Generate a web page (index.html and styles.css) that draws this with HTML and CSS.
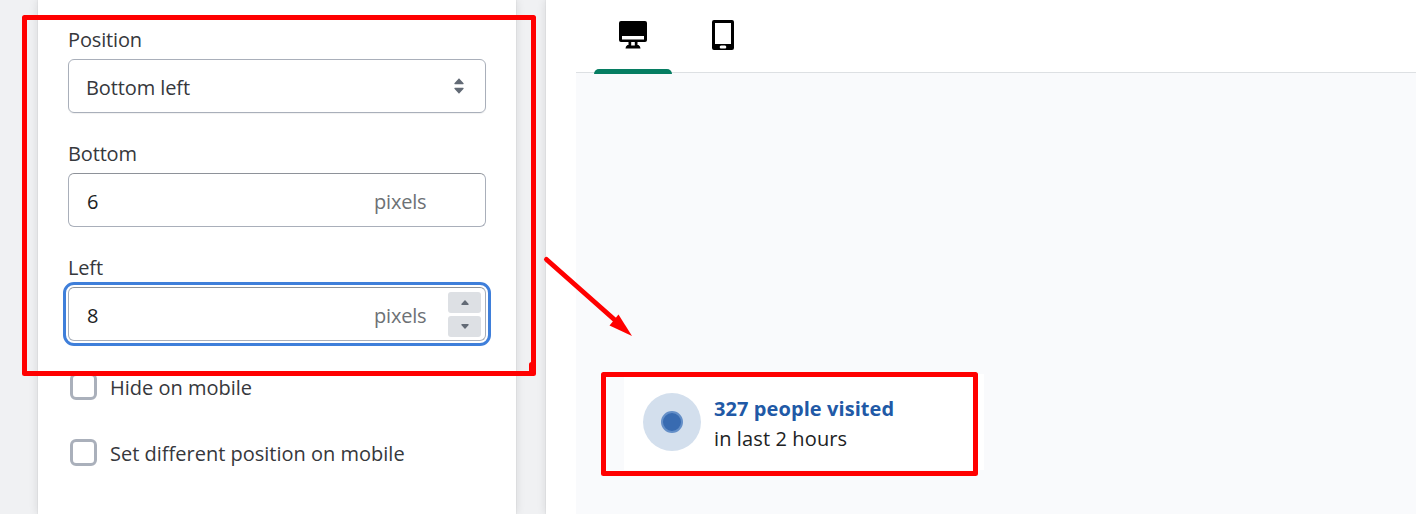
FILE: index.html
```html
<!DOCTYPE html>
<html lang="en">
<head>
<meta charset="utf-8">
<title>Widget position</title>
<link rel="stylesheet" href="styles.css">
</head>
<body>
<main class="layout">
  <section class="settings">
    <div class="field">
      <div class="label">Position</div>
      <div class="control select">
        <span class="value">Bottom left</span>
        <svg class="sort" viewBox="0 0 10 16"><path d="M5 .3 9.6 5.2Q9.9 6.3 9 6.3H1Q.1 6.3 .4 5.2ZM5 15.7.4 10.8Q.1 9.700 1 9.700H9Q9.900 9.700 9.600 10.800Z"/></svg>
      </div>
    </div>
    <div class="field">
      <div class="label">Bottom</div>
      <div class="control number"><span class="value">6</span><span class="suffix">pixels</span></div>
    </div>
    <div class="field">
      <div class="label">Left</div>
      <div class="control number focused">
        <span class="value">8</span><span class="suffix">pixels</span>
        <div class="spinner">
          <span class="step"><svg viewBox="0 0 8 5"><path d="M4 0 7.700 4Q7.800 5 7 5H1Q.2 5 .3 4Z"/></svg></span>
          <span class="step"><svg viewBox="0 0 8 5"><path d="M4 5 .3 1Q.2 0 1 0H7Q7.800 0 7.700 1Z"/></svg></span>
        </div>
      </div>
    </div>
    <div class="checks">
      <div class="check"><span class="box"></span><span class="check-text">Hide on mobile</span></div>
      <div class="check"><span class="box"></span><span class="check-text">Set different position on mobile</span></div>
    </div>
  </section>
  <section class="preview">
    <nav class="tabs">
      <div class="tab active">
        <svg class="desktop" viewBox="0 0 28 28"><path fill-rule="evenodd" d="M2 0H26Q28 0 28 2V19Q28 21 26 21H18.500V24H19.500Q21.500 25 21.500 27.500H6.500Q6.500 25 8.500 24H9.500V21H2Q0 21 0 19V2Q0 0 2 0ZM3 15V18.500H25V15ZM12.200 21V24.500H15.800V21Z"/></svg>
      </div>
      <div class="tab">
        <svg class="mobile" viewBox="0 0 22 30"><path fill-rule="evenodd" d="M2 0H20Q22 0 22 2V28Q22 30 20 30H2Q0 30 0 28V2Q0 0 2 0ZM3 3V24H19V3ZM9 25.500Q7.700 25.500 7.700 27T9 28.500H13Q14.300 28.500 14.300 27T13 25.500Z"/></svg>
      </div>
    </nav>
    <div class="canvas">
      <div class="toast">
        <span class="pulse"><span class="dot"></span></span>
        <div class="message"><div class="count">327 people visited</div><div class="period">in last 2 hours</div></div>
      </div>
    </div>
  </section>
</main>
<svg class="annotations" viewBox="0 0 1416 514">
  <rect x="24.500" y="17.500" width="509" height="356"/>
  <path d="M531.500 364.500V373"/>
  <rect x="603.500" y="374.500" width="372" height="99"/>
  <path d="M546.500 259.500 616 321"/>
  <path class="head" d="M632 336 609.500 325.500 618.500 314.500Z"/>
</svg>
</body>
</html>
```
FILE: styles.css
```css
* { box-sizing: border-box; }
body { margin: 0; background: #f0f1f3; color: #36383c; font: 20px/28px "Open Sans", "Noto Sans", sans-serif; overflow: hidden; }
svg { display: block; }
.layout { display: grid; grid-template-columns: 478px 1fr; gap: 30px; height: 514px; padding-left: 38px; }
.settings, .preview { background: #fff; box-shadow: 0 0 1px rgba(0,0,0,.16), 0 0 9px rgba(23,24,24,.12); }
.settings { padding: 26px 30px 0; }
.field { margin-bottom: 27px; }
.label { margin-bottom: 5px; width: max-content; letter-spacing: -.15px; }
.control { display: flex; align-items: center; height: 54px; padding-left: 18px; border: 1px solid #a9afba; border-radius: 6px; }
.value, .suffix { padding-top: 3px; letter-spacing: -.1px; }
.select { justify-content: space-between; padding: 0 21px 0 17px; box-shadow: 0 1px 1px rgba(0,0,0,.06); }
.sort { width: 10px; height: 16px; fill: #626a75; }
.number { border-top-color: #8e9299; }
.number .value { flex: 0 0 287px; color: #202223; }
.suffix { color: #6d7175; flex: 0 0 74px; letter-spacing: -.2px; }
.focused { outline: 3px solid #3f7fda; outline-offset: 2px; }
.spinner { display: grid; gap: 3px; }
.step { display: grid; place-items: center; width: 33px; height: 21px; border-radius: 3px; background: #dde0e4; }
.step svg { width: 8px; height: 5px; fill: #626a75; }
.checks { display: grid; gap: 39px; margin-top: 32px; padding-left: 2px; }
.check { display: flex; align-items: center; gap: 13px; height: 27px; }
.check-text { padding-top: 2px; }
.box { width: 27px; height: 27px; border: 3px solid #aab0bb; border-radius: 6px; }
.preview { padding-left: 30px; display: grid; grid-template-rows: 73px 1fr; }
.tabs { display: flex; gap: 12px; padding-left: 18px; border-bottom: 1px solid #dde0e3; }
.tab { width: 78px; height: 74px; display: flex; justify-content: center; padding-top: 20px; }
.active { position: relative; }
.active::after { content: ""; position: absolute; left: 0; right: 0; bottom: 0; height: 5px; border-radius: 5px 5px 0 0; background: #067d62; }
.desktop { width: 28px; height: 28px; margin-top: 1px; }
.mobile { width: 22px; height: 30px; }
.canvas { background: #f9fafc; padding: 301px 0 0 48px; }
.toast { display: flex; align-items: center; gap: 13px; width: 360px; height: 96px; padding-left: 19px; background: #fff; }
.pulse { display: grid; place-items: center; width: 58px; height: 58px; border-radius: 50%; background: #d3dfed; }
.dot { width: 22px; height: 22px; border: 2px solid #648fc8; border-radius: 50%; background: #386bb1; }
.message { padding-top: 3px; line-height: 30px; color: #202223; letter-spacing: .08px; }
.count { font-weight: 700; color: #2159a6; width: max-content; }
.period { width: max-content; letter-spacing: .12px; }
.annotations { position: absolute; inset: 0; width: 1416px; height: 514px; fill: none; stroke: #f00; stroke-width: 5; stroke-linejoin: round; stroke-linecap: round; pointer-events: none; }
.head { fill: #f00; stroke: none; }
```
